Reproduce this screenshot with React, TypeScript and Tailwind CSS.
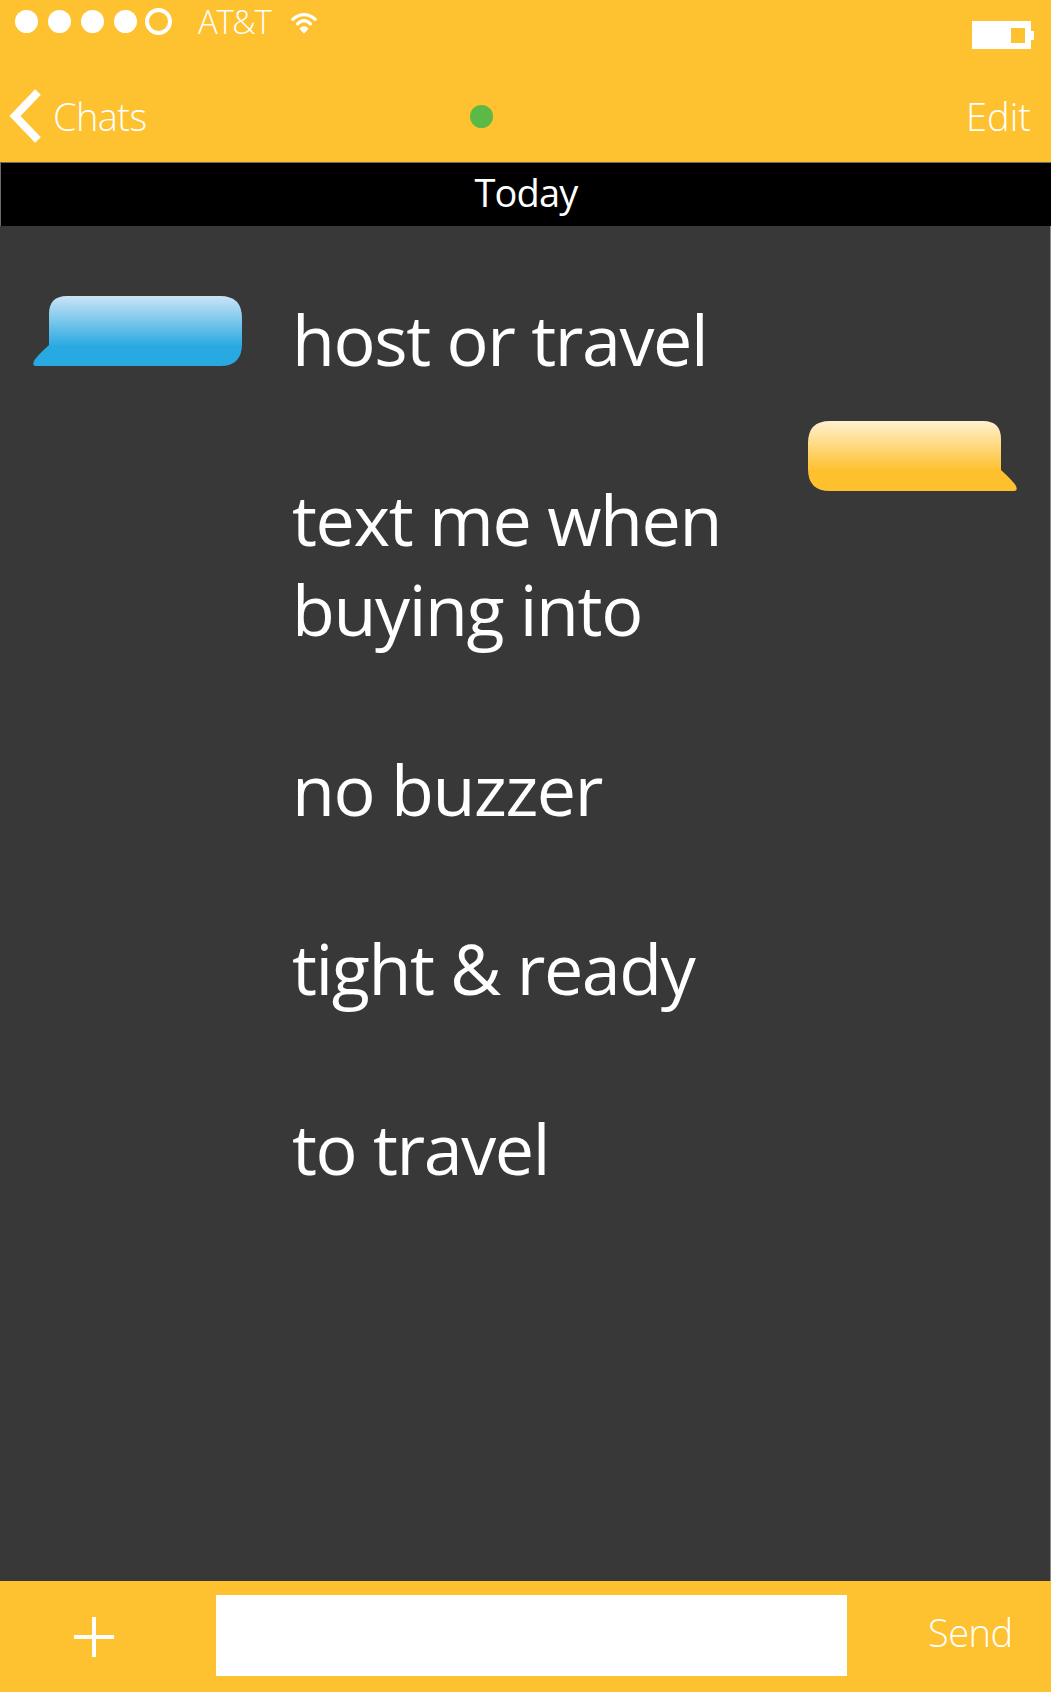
const messages = [['host or travel'], ['text me when', 'buying into'], ['no buzzer'], ['tight & ready'], ['to travel']]

function Bubble({ color }: { color: 'blue' | 'yellow' }) {
  const top = color === 'blue' ? '#cbe4f7' : '#fff1cf'
  const bottom = color === 'blue' ? '#29a9e1' : '#fec02d'
  return (
    <svg width="209" height="70" viewBox="0 0 209 70" className={color === 'yellow' ? '-scale-x-100' : ''}>
      <defs>
        <linearGradient id={color} x1="0" y1="0" x2="0" y2="1">
          <stop offset="0" stopColor={top} />
          <stop offset="0.72" stopColor={bottom} />
        </linearGradient>
      </defs>
      <path
        d="M34 0H187Q209 0 209 22V48Q209 70 187 70H3Q-1 70 1 65Q3 61 16 49V18Q16 0 34 0Z"
        fill={`url(#${color})`}
      />
    </svg>
  )
}

export default function App() {
  return (
    <div className="flex h-[1692px] w-[1051px] flex-col overflow-hidden bg-[#383838] font-['Open_Sans',sans-serif] text-white">
      <header className="h-[162px] shrink-0 bg-[#fec12f]">
        <div className="flex h-[76px] items-start pt-[7px]">
          <div className="ml-[15px] flex items-center gap-[10px] pt-[1px]">
            <span className="h-[23px] w-[23px] rounded-full bg-white" />
            <span className="h-[23px] w-[23px] rounded-full bg-white" />
            <span className="h-[23px] w-[23px] rounded-full bg-white" />
            <span className="h-[23px] w-[23px] rounded-full bg-white" />
            <span className="-ml-[2px] h-[27px] w-[27px] rounded-full border-[4px] border-white" />
          </div>
          <span className="-mt-[5px] ml-[26px] text-[33px] leading-[40px] font-[350] tracking-[-1.400px]">AT&amp;T</span>
          <svg width="26" height="24" viewBox="0 0 28 26" className="mt-[4px] ml-[21px]" fill="none" stroke="white" strokeLinecap="round">
            <path d="M2 9Q14 -1 26 9" strokeWidth="3.5" />
            <path d="M7 14Q14 7 21 14" strokeWidth="3.5" />
            <path d="M10 19L14 23.5L18 19Q14 15.500 10 19Z" fill="white" strokeWidth="1.500" strokeLinejoin="round" />
          </svg>
          <div className="mt-[14px] mr-[17px] ml-auto flex items-center">
            <div className="flex h-[28px] w-[59px] items-center justify-end bg-white pr-[6px]">
              <div className="h-[15px] w-[14px] bg-[#fec12f]" />
            </div>
            <div className="h-[9px] w-[3px] bg-white" />
          </div>
        </div>
        <div className="flex h-[80px] items-center">
          <svg width="32" height="54" viewBox="0 0 32 54" className="ml-[9px]" fill="none" stroke="white" strokeWidth="8">
            <path d="M29 3L6 27L29 51" />
          </svg>
          <span className="ml-[12px] w-[417px] text-[38px] leading-none font-[350] tracking-[-0.6px]">Chats</span>
          <span className="h-[23px] w-[23px] rounded-full bg-[#5ab947]" />
          <span className="mr-[20px] ml-auto text-[38px] leading-none font-[350]">Edit</span>
        </div>
      </header>

      <div className="flex h-[64px] shrink-0 items-center justify-center border-t border-l border-[#6b6b6b] bg-black pb-[6px] text-[38px] leading-none tracking-[-0.8px]">
        Today
      </div>

      <main className="flex flex-1 border-r border-[#8a8a8a]">
        <div className="w-[292px] shrink-0 pt-[70px] pl-[33px]">
          <Bubble color="blue" />
        </div>
        <div className="flex-1 pt-[69px] text-[70px] leading-[89.9px] tracking-[-1.4px]">
          {messages.map((lines) => (
            <div key={lines[0]} className="mb-[89.9px]">
              {lines.map((line) => (
                <div key={line}>{line}</div>
              ))}
            </div>
          ))}
        </div>
        <div className="shrink-0 pt-[195px] pr-[33px]">
          <Bubble color="yellow" />
        </div>
      </main>

      <footer className="flex h-[111px] shrink-0 items-center bg-[#fec12f]">
        <div className="flex w-[216px] justify-start pl-[74px]">
          <svg width="40" height="40" viewBox="0 0 40 40" fill="white">
            <rect x="18" y="0" width="4" height="40" />
            <rect x="0" y="18" width="40" height="4" />
          </svg>
        </div>
        <div className="mb-[3px] h-[81px] w-[631px] bg-white" />
        <span className="mb-[9px] ml-[81px] text-[38px] leading-none font-[350] tracking-[-0.5px]">Send</span>
      </footer>
    </div>
  )
}
